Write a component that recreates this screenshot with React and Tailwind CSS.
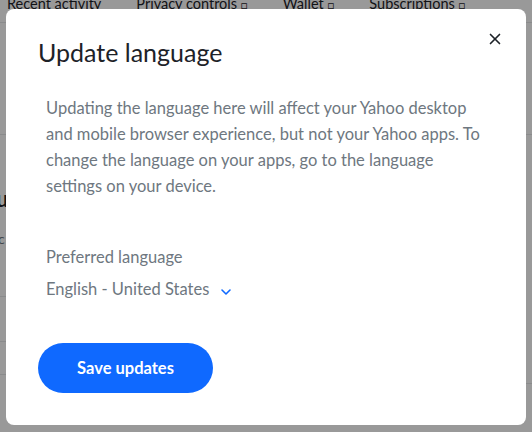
import { X, ChevronDown } from "lucide-react";

const navItems = [
  { label: "Recent activity", ext: false },
  { label: "Privacy controls", ext: true },
  { label: "Wallet", ext: true },
  { label: "Subscriptions", ext: true },
];

const BackgroundPage = () => {
  return (
    <div className="h-[432px] w-[532px] overflow-hidden bg-white font-['Lato',sans-serif]">
      {/* top nav, mostly scrolled off */}
      <div className="-mt-[14px] flex h-[37px] items-center gap-[35px] border-b border-[#e6e8ea] pl-[7px] text-[14.5px] text-[#1d2228]">
        {navItems.map((item) => (
          <span key={item.label} className="whitespace-nowrap">
            {item.label}
            {item.ext && <span className="ml-1 text-[11px]">□</span>}
          </span>
        ))}
      </div>
      <div className="flex">
        <div className="w-[266px]">
          <div className="h-[112px] border-b border-[#e6e8ea]" />
          <div className="h-[162px] border-b border-[#e6e8ea] pt-[50px]">
            <div className="-ml-[4px] text-[22px] font-bold leading-[28px] text-[#1d2228]">u</div>
            <div className="-ml-[2px] mt-[16px] text-[14px] leading-[20px] text-[#6e7780]">c</div>
          </div>
          <div className="h-[45px] border-b border-[#e6e8ea]" />
          <div className="h-[33px] border-b border-[#e6e8ea]" />
        </div>
        <div className="flex-1">
          <div className="h-[112px] border-b border-[#e6e8ea]" />
          <div className="h-[249px] border-b border-[#e6e8ea]" />
        </div>
      </div>
    </div>
  );
};

const App = () => {
  return (
    <div className="relative h-[432px] w-[532px] overflow-hidden">
      <BackgroundPage />

      {/* overlay */}
      <div className="absolute inset-0 bg-black/40" />

      {/* modal */}
      <div className="absolute left-[6px] top-[9px] h-[416px] w-[520px] rounded-[8px] bg-white px-[32px] pt-[26px] font-['Lato',sans-serif]">
        <button type="button" className="absolute right-[22px] top-[21px] flex h-[18px] w-[18px] items-center justify-center text-[#1d2228]">
          <X size={18} strokeWidth={2.2} />
        </button>

        <h2 className="text-[25px] leading-[34px] text-[#1d2228]">Update language</h2>

        <div className="px-[8px]">
          <p className="mt-[26px] w-[440px] text-[16.5px] leading-[26px] text-[#6e7780]">
            Updating the language here will affect your Yahoo desktop and mobile browser experience, but not your Yahoo apps. To change the language on your apps, go to the language settings on your device.
          </p>

          <div className="mt-[46px] text-[16.5px] leading-[24px] text-[#6e7780]">Preferred language</div>
          <div className="mt-[8px] flex items-start gap-[9px] text-[16.5px] leading-[24px] text-[#6e7780]">
            <span>English - United States</span>
            <ChevronDown size={16} strokeWidth={2.4} className="mt-[7px] text-[#0f69ff]" />
          </div>
        </div>

        <button
          type="button"
          className="mt-[42px] h-[50px] w-[175px] rounded-full bg-[#0f69ff] text-[16.5px] font-bold text-white"
        >
          Save updates
        </button>
      </div>
    </div>
  );
};

export default App;
